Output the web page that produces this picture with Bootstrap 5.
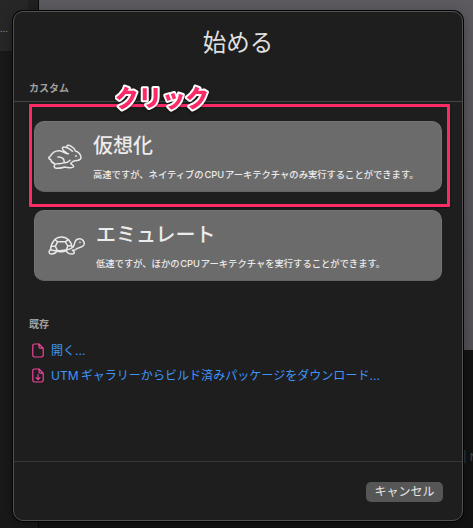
<!DOCTYPE html>
<html lang="ja">
<head>
<meta charset="utf-8">
<meta name="viewport" content="width=device-width, initial-scale=1">
<title>始める</title>
<link href="https://cdn.jsdelivr.net/npm/bootstrap@5.3.0/dist/css/bootstrap.min.css" rel="stylesheet">
<style>
body{width:473px;height:528px;background:#131313;font-family:Inter,"Noto Sans CJK JP",sans-serif;color:#dfdfdf}
.desk{width:473px;height:528px}
.side{width:39px;background:#191919;border-right:1px solid #090909}
.side-top{height:51px;background:#272728;border-right:10px solid #202021}
.main-top{height:350px;background:linear-gradient(#5d5b60,#535157)}
.dots{left:0;top:21px;font-size:9px;line-height:16px;color:#888}
.behind{left:463px;top:449px;font-size:11px;line-height:16px;color:#484848;white-space:nowrap}
.sheet{left:13px;top:11px;width:450px;height:510px;border-radius:10px;background:#1e1e1e;border:1px solid #515151;box-shadow:0 0 0 1px #050505,0 3px 14px rgba(0,0,0,.35)}
.sheet-head{height:90px;border-bottom:1px solid #444;padding:16px 0 0 15px}
.sheet-title{font-size:23.5px;line-height:30px;font-weight:400;margin-right:15px}
.sec{font-size:10px;line-height:14px;font-weight:700;color:#a0a0a0}
.sheet-head .sec{margin-top:23px}
.sheet-body{height:360px;padding:19px 20px 0;border-bottom:1px solid #363636}
.choice{height:71px;border-radius:10px;background:#6b6b6b;border:1px solid #747474;border-bottom-color:#646464;color:#ececec;text-align:left;padding:0 0 0 13px}
.choice h2{font-size:20px;line-height:26px;font-weight:500;margin:0 0 9px}
.choice p{font-size:9.3px;line-height:14px;font-weight:500;margin:0;white-space:nowrap}
.choice + .choice{margin-top:18px}
.copy{margin-left:11px;padding-top:11px}
.lat{margin:0 .8px}
.utm{margin-right:2px}
.existing{margin:36px 0 7px -5px}
.links{font-size:12.05px;line-height:18px;margin-left:-2px}
.links a{color:#3f95fa;height:25px;white-space:nowrap}
.links svg{margin-right:7px}
.stroke{fill:none;stroke:#e8e8e8;stroke-width:1.5;stroke-linecap:round;stroke-linejoin:round}
.doc{fill:none;stroke:#f2439b;stroke-width:1.2;stroke-linecap:round;stroke-linejoin:round}
.cancel{width:77px;height:20px;border-radius:5px;background:#565656;color:#e6e6e6;font-size:12px;line-height:18px;padding:0;border:0;margin:20px 19px 0 0}
.focus-box{left:29px;top:104px;width:421px;height:103px;border:3px solid #fc2b68;border-radius:1px;box-shadow:0 1px 2px rgba(0,0,0,.4)}
.note{left:115px;top:83px;filter:drop-shadow(0 1px 1px rgba(0,0,0,.5))}
.note text{font-family:"Noto Sans CJK JP",sans-serif;font-size:23.5px;font-weight:900;fill:#fc2b68;stroke:#fff;stroke-width:4px;stroke-linejoin:round;paint-order:stroke fill}
</style>
<script src="https://cdn.jsdelivr.net/npm/bootstrap@5.3.0/dist/js/bootstrap.bundle.min.js"></script>
</head>
<body>
<div class="desk d-flex position-relative overflow-hidden">
  <div class="side flex-shrink-0"><div class="side-top"></div></div>
  <div class="flex-grow-1"><div class="main-top"></div></div>
  <span class="dots position-absolute">...</span>
  <span class="behind position-absolute">| N</span>

  <section class="sheet position-absolute">
    <header class="sheet-head">
      <h1 class="sheet-title text-center mb-0">始める</h1>
      <div class="sec">カスタム</div>
    </header>
    <div class="sheet-body">
      <button class="choice btn d-flex w-100">
        <svg class="stroke flex-shrink-0 align-self-center" width="34" height="26" viewBox="0 0 34 26">
          <path d="M2.6 15.5C.3 14.8.2 12.8 2.2 12.4C4 9 7.5 6.6 11.5 6.8C15 7 16.8 9.6 20.4 9.8M18.6 8.8C16.5 7.5 14.2 5.8 14.4 3.8C15 1.5 21.4 4 24.4 7.2M18.8 3.2C18.6 1 20.6.8 22.6 1.9C25 3.2 26.6 5 27.3 7C30.6 7.6 33 10.6 33 13.6C32.8 16.4 29.6 16.6 26.8 16.8C25 17 23.8 18.4 22.8 19.4M2.6 15.5C3 17.4 4.6 19 6.6 19.6M10 13C14 12.8 16.8 15 16 18.6M16 18.6C13 20.4 10.4 19.2 8 19.9C5.4 20.7 5.6 24.2 8.6 24.2C11.8 24.2 14.6 24 16.6 23M16 18.6C17.5 19.2 20.4 17.8 22 16.2M22.8 19.4C23.2 21 25.8 20.9 25.7 22.5C25.5 24.1 20 24 16.6 23"/>
          <circle cx="28" cy="12" r=".9" fill="#e8e8e8" stroke="none"/>
        </svg>
        <span class="copy"><h2>仮想化</h2><p>高速ですが、ネイティブの<span class="lat">CPU</span>アーキテクチャのみ実行することができます。</p></span>
      </button>
      <button class="choice btn d-flex w-100">
        <svg class="stroke flex-shrink-0 align-self-center" width="37" height="22" viewBox="0 0 37 22">
          <path d="M2.5 14.7C3.2 7 7.5 2 13.6 2C19.5 2 23.5 6.8 24.2 12.5C21.5 15.5 7 16.5 2.5 14.7ZM2.5 14.7C.6 16 .6 18.8 3 19C6 19.1 7.8 18.2 8.8 16.2M9.5 16.2C12 17 16.3 16.7 18.3 15.6M18.3 15.7C19.4 18.3 21.5 19.2 24.6 19C27 18.7 26.8 16.2 24.4 15.2M24.2 12.5C27.3 12.5 25 5 30.2 4C34.2 3.2 37 6.5 36 9.8C35 12.7 31 12 28.8 13.7C27.6 14.8 26.2 15.4 24.4 15.2M7 4.6L9.5 6.8H17.4L20.2 4.6M9.5 6.8L7.3 11.3L9.5 15.7M17.4 6.8L19.8 11L18.3 15.2M3.2 11.3H7.3M19.8 11L23.8 10.5"/>
          <circle cx="32" cy="7.4" r=".8" fill="#e8e8e8" stroke="none"/>
        </svg>
        <span class="copy"><h2>エミュレート</h2><p>低速ですが、ほかの<span class="lat">CPU</span>アーキテクチャを実行することができます。</p></span>
      </button>
      <div class="sec existing">既存</div>
      <div class="links d-flex flex-column">
        <a class="d-flex align-items-center text-decoration-none" href="#"><svg class="doc" width="12" height="15" viewBox="0 0 12 15"><path d="M7 1H2.5Q.8 1 .8 2.7V12.3Q.8 14 2.5 14H9.5Q11.2 14 11.2 12.3V5.2L7 1V4Q7 5.2 8.2 5.2H11.2"/></svg>開く...</a>
        <a class="d-flex align-items-center text-decoration-none" href="#"><svg class="doc" width="12" height="15" viewBox="0 0 12 15"><path d="M7 1H2.5Q.8 1 .8 2.7V12.3Q.8 14 2.5 14H9.5Q11.2 14 11.2 12.3V5.2L7 1V4Q7 5.2 8.2 5.2H11.2M6 6.5V11.5M4 9.7L6 11.7L8 9.7"/></svg><span class="utm">UTM</span>ギャラリーからビルド済みパッケージをダウンロード...</a>
      </div>
    </div>
    <footer class="d-flex justify-content-end"><button class="cancel btn">キャンセル</button></footer>
  </section>

  <div class="focus-box position-absolute"></div>
  <svg class="note position-absolute" width="100" height="32"><text x="0" y="23.5">クリック</text></svg>
</div>
</body>
</html>
